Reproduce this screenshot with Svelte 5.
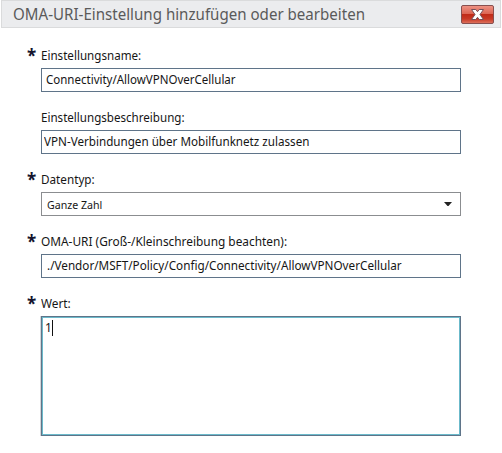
<script>
  const fields = [
    { label: 'Einstellungsname:', labelWidth: 100, required: true, kind: 'text', value: 'Connectivity/AllowVPNOverCellular', width: 190, pad: 4 },
    { label: 'Einstellungsbeschreibung:', labelWidth: 143.5, required: false, kind: 'text', value: 'VPN-Verbindungen über Mobilfunknetz zulassen', width: 265, pad: 2 },
    { label: 'Datentyp:', labelWidth: 54, required: true, kind: 'select', value: 'Ganze Zahl', width: 55, pad: 5 },
    { label: 'OMA-URI (Groß-/Kleinschreibung beachten):', labelWidth: 246.5, required: true, kind: 'text', value: './Vendor/MSFT/Policy/Config/Connectivity/AllowVPNOverCellular', width: 355, pad: 5 },
    { label: 'Wert:', labelWidth: 30, required: true, kind: 'area', value: '1', width: 7, pad: 3 }
  ];

  // Condenses a line of text to the given width.
  function fit(node, width) {
    const natural = node.offsetWidth;
    if (natural) node.style.transform = `scaleX(${width / natural})`;
  }
</script>

<div class="dialog">
  <header>
    <h1><span class="line" use:fit={352}>OMA-URI-Einstellung hinzufügen oder bearbeiten</span></h1>
    <button class="close" aria-label="Schließen">
      <svg width="33" height="19" viewBox="0 0 33 19">
        <defs>
          <linearGradient id="red" x1="0" y1="0" x2="0" y2="1">
            <stop offset="0" stop-color="#ee9486" />
            <stop offset="0.46" stop-color="#dc6553" />
            <stop offset="0.5" stop-color="#c02b18" />
            <stop offset="0.75" stop-color="#c93a26" />
            <stop offset="1" stop-color="#de7661" />
          </linearGradient>
        </defs>
        <rect x="0.5" y="0.5" width="32" height="18" rx="1.5" fill="url(#red)" stroke="#87504f" />
        <path d="M10.500 4.500h4.300L16.500 6.700 18.200 4.500h4.300L19 9.500l3.500 5h-4.300L16.500 12.300 14.800 14.500h-4.300l3.500-5z" fill="#fff" stroke="#75505a" stroke-width="1" />
      </svg>
    </button>
  </header>

  <main>
    {#each fields as f}
      <section>
        <div class="caption">
          <span class="star">{f.required ? '*' : ''}</span>
          <span class="line" use:fit={f.labelWidth}>{f.label}</span>
        </div>
        <div class="box {f.kind}" style="padding-left: {f.pad}px">
          <span class="line value" use:fit={f.width}>{f.value}</span>
          {#if f.kind === 'select'}
            <svg class="arrow" width="8" height="4" viewBox="0 0 8 4"><path d="M0 0h8L4.500 4h-1z" fill="#222" /></svg>
          {/if}
        </div>
      </section>
    {/each}
  </main>
</div>

<style>
  :global(body) { margin: 0; background: #fff; }
  .dialog {
    width: 502px;
    height: 453px;
    overflow: hidden;
    box-sizing: border-box;
    padding-left: 1px;
    background: #fff;
    font-family: "Noto Sans", "Open Sans", sans-serif;
    color: #161616;
  }
  header {
    box-sizing: border-box;
    width: 500px;
    height: 28px;
    padding: 0 6px 0 11px;
    border: 1px solid #dadbdc;
    background: #ebecee;
    display: flex;
    align-items: center;
    justify-content: space-between;
  }
  h1 {
    margin: 0;
    font-size: 16px;
    line-height: 26px;
    font-weight: 400;
    color: #5a5a5a;
    width: 360px;
  }
  .close { padding: 0; border: 0; background: none; height: 19px; display: flex; }
  .line { display: inline-block; white-space: nowrap; transform-origin: 0 50%; }
  main { padding-top: 18px; }
  section { height: 62px; }
  .caption {
    display: flex;
    height: 22px;
    line-height: 18px;
    font-size: 13px;
  }
  .star {
    width: 14px;
    padding-left: 26px;
    font-size: 17px;
    line-height: 20px;
    font-weight: 700;
    color: #14142e;
  }
  .box {
    box-sizing: border-box;
    width: 420px;
    height: 24px;
    margin-left: 40px;
    border: 1px solid #5f7489;
    display: flex;
    align-items: center;
    font-size: 12px;
    line-height: 22px;
  }
  .select {
    border-color: #8b8d90;
    justify-content: space-between;
    padding-right: 8px;
    font-size: 11px;
  }
  .select .value { padding-top: 2px; }
  .area {
    height: 120px;
    align-items: flex-start;
    box-shadow: inset 0 0 0 1px #6bbacb, -1px 0 0 #d4d6d9;
  }
  .area .value { line-height: 21px; }
  /* text caret */
  .area::after { content: ''; width: 1px; height: 16px; margin-top: 3px; background: #111; }
</style>
